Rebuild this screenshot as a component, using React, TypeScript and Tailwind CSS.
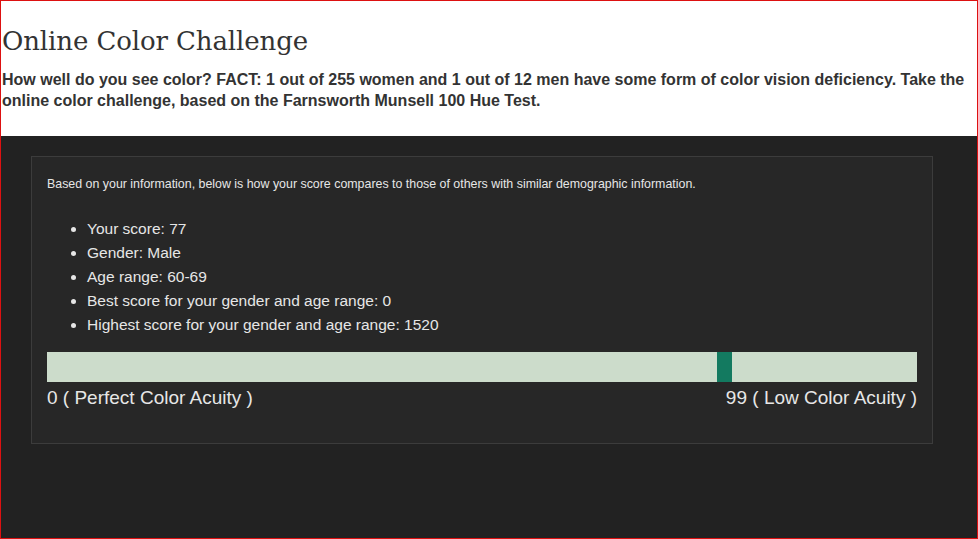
export default function App() {
  const items = [
    "Your score: 77",
    "Gender: Male",
    "Age range: 60-69",
    "Best score for your gender and age range: 0",
    "Highest score for your gender and age range: 1520",
  ];
  return (
    <div className="w-[978px] h-[539px] border border-[#d11] bg-[#222222] flex flex-col overflow-hidden" style={{ fontFamily: '"Liberation Sans", Arial, sans-serif' }}>
      <div className="bg-white h-[135px] shrink-0 pt-[25px]">
        <h1 className="text-[26px] leading-[30px] text-[#333] ml-[1px]" style={{ fontFamily: '"DejaVu Serif", serif', letterSpacing: '-0.1px' }}>Online Color Challenge</h1>
        <p className="mt-[13px] text-[16px] leading-[21px] font-bold text-[#333] ml-[1px]">
          How well do you see color? FACT: 1 out of 255 women and 1 out of 12 men have some form of color vision deficiency. Take the online color challenge, based on the Farnsworth Munsell 100 Hue Test.
        </p>
      </div>
      <div className="pt-[20px] pl-[30px]">
        <div className="w-[902px] h-[288px] border border-[#3c3c3c] bg-[#272727] px-[15px] pt-[20px]">
          <p className="text-[12.4px] leading-[14px] text-[#e6e6e6]">Based on your information, below is how your score compares to those of others with similar demographic information.</p>
          <ul className="list-disc pl-[40px] mt-[26px] text-[15.5px] leading-[24px] text-[#e6e6e6]">
            {items.map((t) => (
              <li key={t}>{t}</li>
            ))}
          </ul>
          <div className="mt-[15px] h-[30px] bg-[#ccdccb] relative">
            <div className="absolute top-0 left-[670px] w-[15px] h-[30px] bg-[#137a60]" />
          </div>
          <div className="flex justify-between text-[19px] leading-[22px] text-[#e6e6e6] mt-[5px]">
            <span>0 ( Perfect Color Acuity )</span>
            <span>99 ( Low Color Acuity )</span>
          </div>
        </div>
      </div>
    </div>
  );
}
